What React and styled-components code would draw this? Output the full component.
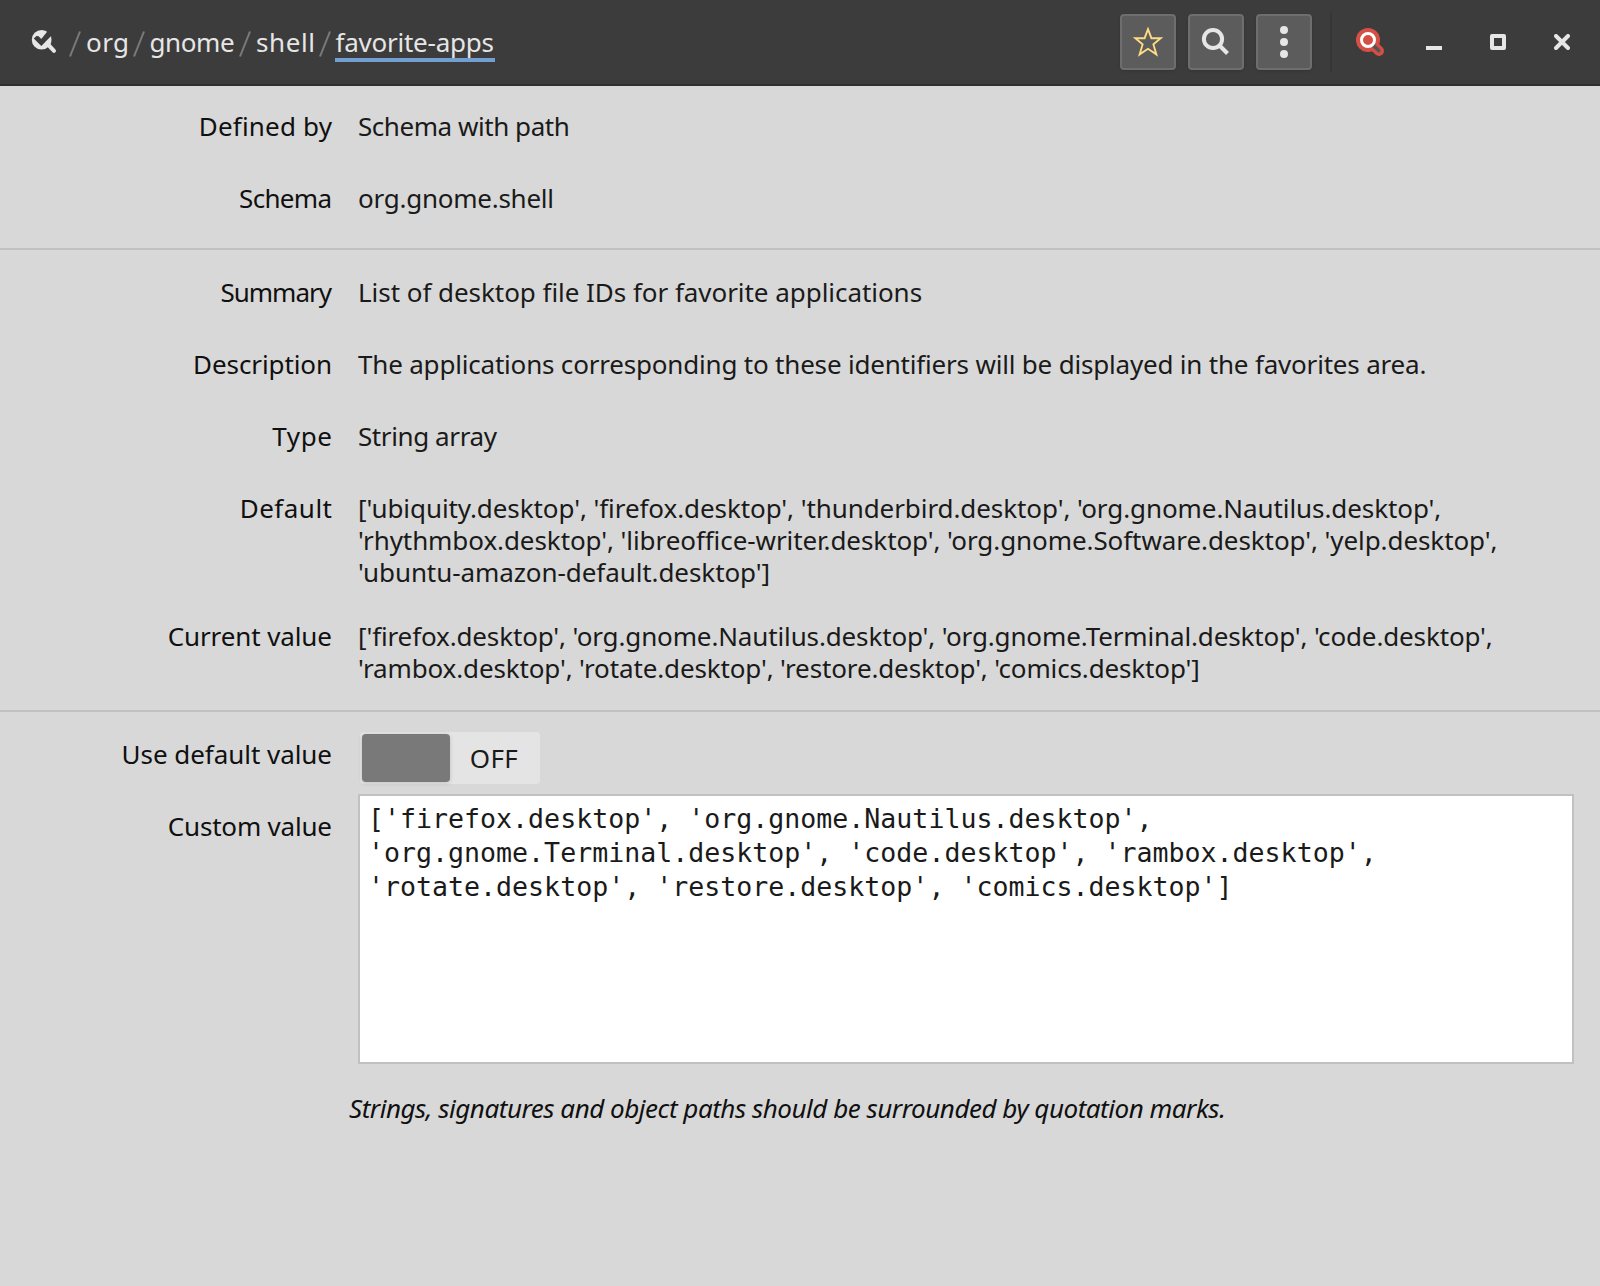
import React from "react";
import styled, { createGlobalStyle } from "styled-components";

const GlobalStyle = createGlobalStyle`
  *, *::before, *::after { box-sizing: border-box; }
  body {
    margin: 0;
    background: #d8d8d8;
    color: #1a1a1a;
    font-family: "Noto Sans", "Open Sans", sans-serif;
    font-size: 26px;
    line-height: 32px;
  }
`;

const Window = styled.div`
  display: flex;
  flex-direction: column;
  width: 1600px;
  height: 1286px;
  overflow: hidden;
  background: #d8d8d8;
`;

const HeaderBar = styled.header`
  display: flex;
  align-items: center;
  height: 86px;
  padding: 0 30px;
  background: #3c3c3c;
  border-bottom: 2px solid #302e2e;
  color: #e6e6e6;
`;

const PathBar = styled.nav`
  display: flex;
  align-items: center;
  flex: 1;
`;

const RootIcon = styled.svg`
  width: 28px;
  height: 28px;
  margin-right: 11px;
`;

const Slash = styled.svg`
  width: 12px;
  height: 26px;
  margin-top: 4px;
  fill: none;
  stroke: #7b7b79;
  stroke-width: 2;
`;

const Crumb = styled.span`
  width: ${(p) => p.$width}px;
  height: 38px;
  padding: 2px 0 0 1px;
  white-space: nowrap;
  letter-spacing: ${(p) => p.$spacing}px;
  margin: 2px ${(p) => (p.$current ? 0 : 4)}px 0 4px;
  border-bottom: 4px solid ${(p) => (p.$current ? "#729fcf" : "transparent")};
`;

const Actions = styled.div`
  display: flex;
  gap: 12px;
`;

const ToolButton = styled.button`
  display: flex;
  align-items: center;
  justify-content: center;
  width: 56px;
  height: 56px;
  padding: 0;
  color: #e6e6e6;
  background: #5c5c5c;
  border: 2px solid #6e6e6e;
  border-radius: 4px;
  box-shadow: 0 1px 3px rgba(0, 0, 0, 0.15);
`;

const ButtonIcon = styled.svg`
  width: 32px;
  height: 32px;
`;

const Separator = styled.div`
  width: 2px;
  height: 60px;
  margin: 0 24px 0 18px;
  background: #363636;
`;

const AppIcon = styled.svg`
  width: 28px;
  height: 28px;
  margin-right: 42px;
`;

const WindowControls = styled.div`
  display: flex;
  gap: 48px;
`;

const ControlIcon = styled.svg`
  width: 16px;
  height: 16px;
`;

const Section = styled.section`
  padding-top: ${(p) => p.$top}px;
  border-bottom: ${(p) => (p.$last ? "none" : "2px solid #c1c1c1")};
`;

const Row = styled.div`
  display: grid;
  grid-template-columns: 332px 1fr;
  column-gap: 26px;
  height: ${(p) => p.$height}px;
`;

const Label = styled.div`
  padding-top: 20px;
  margin-right: ${(p) => -p.$spacing}px;
  text-align: right;
  white-space: nowrap;
  color: #101010;
  letter-spacing: ${(p) => p.$spacing}px;
`;

const Value = styled.div`
  padding-top: 20px;
  white-space: pre;
  letter-spacing: ${(p) => p.$spacing}px;
`;

const Switch = styled.div`
  display: flex;
  width: 180px;
  height: 52px;
  margin: 14px 0 0 2px;
  padding: 2px;
  background: #e4e4e4;
  border-radius: 4px;
`;

const SwitchSlider = styled.div`
  width: 88px;
  height: 48px;
  background: #797979;
  border-radius: 4px;
  box-shadow: 0 1px 4px rgba(0, 0, 0, 0.15);
`;

const SwitchLabel = styled.div`
  flex: 1;
  padding-top: 8px;
  text-align: center;
  letter-spacing: 0.4px;
`;

const ValueEditor = styled.div`
  width: 1216px;
  height: 270px;
  margin-top: 4px;
  padding: 6px 8px;
  background: #fff;
  border: 2px solid #c1c1c1;
  font: 26.6px/34px "DejaVu Sans Mono", monospace;
  white-space: pre;
`;

const Note = styled.p`
  margin: 28px 0 0 349px;
  font-style: italic;
  white-space: nowrap;
  letter-spacing: -0.475px;
  color: #101010;
`;

const crumbs = [
  ["org", 43.5, 0.4],
  ["gnome", 86.5, -0.4],
  ["shell", 59.5, 0.6],
  ["favorite-apps", 160, -0.24],
];

const schemaRows = [
  { label: "Defined by", ls: 0.195, height: 72, text: "Schema with path", spacing: -0.45 },
  { label: "Schema", ls: -0.699, height: 86, text: "org.gnome.shell", spacing: -0.25 },
];

const keyRows = [
  {
    label: "Summary", ls: -1, height: 72,
    text: "List of desktop file IDs for favorite applications", spacing: -0.045,
  },
  {
    label: "Description", ls: -0.1, height: 72,
    text: "The applications corresponding to these identifiers will be displayed in the favorites area.",
    spacing: -0.191,
  },
  { label: "Type", ls: 0.6, height: 72, text: "String array", spacing: -0.4 },
  {
    label: "Default", ls: 0.5, height: 128, spacing: -0.079,
    text: `['ubiquity.desktop', 'firefox.desktop', 'thunderbird.desktop', 'org.gnome.Nautilus.desktop',
'rhythmbox.desktop', 'libreoffice-writer.desktop', 'org.gnome.Software.desktop', 'yelp.desktop',
'ubuntu-amazon-default.desktop']`,
  },
  {
    label: "Current value", ls: -0.1, height: 110, spacing: -0.135,
    text: `['firefox.desktop', 'org.gnome.Nautilus.desktop', 'org.gnome.Terminal.desktop', 'code.desktop',
'rambox.desktop', 'rotate.desktop', 'restore.desktop', 'comics.desktop']`,
  },
];

const customValue = `['firefox.desktop', 'org.gnome.Nautilus.desktop',
'org.gnome.Terminal.desktop', 'code.desktop', 'rambox.desktop',
'rotate.desktop', 'restore.desktop', 'comics.desktop']`;

function InfoRow({ row }) {
  return (
    <Row $height={row.height}>
      <Label $spacing={row.ls}>{row.label}</Label>
      <Value $spacing={row.spacing}>{row.text}</Value>
    </Row>
  );
}

export default function App() {
  return (
    <Window>
      <GlobalStyle />
      <HeaderBar>
        <PathBar>
          <RootIcon viewBox="0 0 28 28">
            <circle cx="11.6" cy="11.7" r="9.8" fill="#e6e6e6" />
            <path d="M18 16.5l6 6.3" stroke="#e6e6e6" strokeWidth="4" strokeLinecap="round" />
            <path d="M3.8 10.4L6.4 8l2.2.3 2.7 2.6 7-8.6L25 3l-4 5.2-9.7 9.8z" fill="#3c3c3c" />
            <path d="M21.2 8.2v6.3L19 18l-4-3.6z" fill="#e6e6e6" />
          </RootIcon>
          {crumbs.map(([name, width, spacing], i) => (
            <React.Fragment key={name}>
              <Slash viewBox="0 0 12 26"><path d="M1 25.5L11 .5" /></Slash>
              <Crumb $width={width} $spacing={spacing} $current={i === crumbs.length - 1}>{name}</Crumb>
            </React.Fragment>
          ))}
        </PathBar>
        <Actions>
          <ToolButton>
            <ButtonIcon viewBox="0 0 32 32">
              <path
                d="M16 3.2l3.4 9h9.3l-7.3 6.2 3 10-8.4-5.6-8.4 5.6 3-10-7.3-6.2h9.3z"
                fill="none" stroke="#fcdb83" strokeWidth="1.9"
              />
            </ButtonIcon>
          </ToolButton>
          <ToolButton>
            <ButtonIcon viewBox="0 0 32 32" fill="none" stroke="currentColor" strokeWidth="4">
              <circle cx="13" cy="13" r="9.1" />
              <path d="M19.5 19.5l8 8" />
            </ButtonIcon>
          </ToolButton>
          <ToolButton>
            <ButtonIcon viewBox="0 0 32 32" fill="currentColor">
              <circle cx="16" cy="4" r="4" />
              <circle cx="16" cy="16" r="4" />
              <circle cx="16" cy="28" r="4" />
            </ButtonIcon>
          </ToolButton>
        </Actions>
        <Separator />
        <AppIcon viewBox="0 0 28 28">
          <path d="M17 17l6 6" stroke="#d64f45" strokeWidth="10" strokeLinecap="round" />
          <circle cx="12" cy="12" r="12" fill="#d64f45" />
          <path d="M17.5 17.5l5.3 5.3" stroke="#555" strokeWidth="3.6" strokeLinecap="round" />
          <circle cx="12" cy="12" r="6.5" fill="#d64f45" stroke="#fff" strokeWidth="3" />
        </AppIcon>
        <WindowControls>
          <ControlIcon viewBox="0 0 16 16"><path d="M0 12h16v4H0z" fill="#e6e6e6" /></ControlIcon>
          <ControlIcon viewBox="0 0 16 16">
            <rect x="2" y="2" width="12" height="12" fill="none" stroke="#e6e6e6" strokeWidth="4" strokeLinejoin="round" />
          </ControlIcon>
          <ControlIcon viewBox="0 0 16 16">
            <path d="M2 2l12 12M14 2L2 14" stroke="#e6e6e6" strokeWidth="4" strokeLinecap="round" />
          </ControlIcon>
        </WindowControls>
      </HeaderBar>

      <Section $top={4}>
        {schemaRows.map((row) => <InfoRow key={row.label} row={row} />)}
      </Section>
      <Section $top={6}>
        {keyRows.map((row) => <InfoRow key={row.label} row={row} />)}
      </Section>
      <Section $top={6} $last>
        <Row $height={72}>
          <Label $spacing={-0.05}>Use default value</Label>
          <Switch>
            <SwitchSlider />
            <SwitchLabel>OFF</SwitchLabel>
          </Switch>
        </Row>
        <Row $height={274}>
          <Label $spacing={-0.2}>Custom value</Label>
          <ValueEditor>{customValue}</ValueEditor>
        </Row>
        <Note>Strings, signatures and object paths should be surrounded by quotation marks.</Note>
      </Section>
    </Window>
  );
}
